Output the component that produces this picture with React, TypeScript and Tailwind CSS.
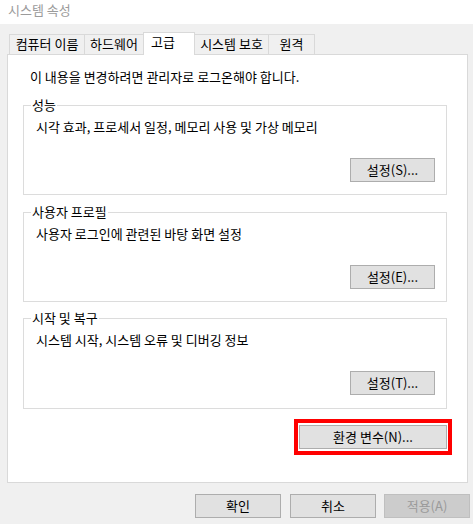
import React from "react";

const font = { fontFamily: '"Noto Sans CJK KR", "Noto Sans", sans-serif' };

function Tab({ label, w, selected, first }: { label: string; w: string; selected?: boolean; first?: boolean }) {
  if (selected) {
    return (
      <div className={`relative z-10 -ml-px h-[23px] ${w} border border-b-0 border-[#d9d9d9] bg-white pl-[7px] pt-[1px] leading-[16px]`}>
        {label}
      </div>
    );
  }
  return (
    <div
      className={`${first ? "" : "-ml-px"} mb-px h-[20px] ${w} border border-b-0 border-[#d9d9d9] bg-[#f0f0f0] pt-[1px] text-center leading-[16px]`}
    >
      {label}
    </div>
  );
}

function Btn({ label, w, disabled }: { label: string; w: string; disabled?: boolean }) {
  return (
    <div
      className={`${w} flex h-[24px] items-center justify-center border leading-[16px] ${
        disabled ? "border-[#bfbfbf] bg-[#cccccc] text-[#9a9a9a]" : "border-[#adadad] bg-[#e1e1e1] text-black"
      }`}
    >
      {label}
    </div>
  );
}

function Group({ title, desc, btn, h, mt }: { title: string; desc: string; btn: string; h: string; mt: string }) {
  return (
    <div className={`${mt} ml-[15px] flex ${h} w-[424px] flex-col border border-[#dcdcdc]`}>
      <div className="-mt-[9px] ml-[7px] w-fit bg-white px-[1px] leading-[16px]">{title}</div>
      <div className="ml-[12px] mt-[6px] leading-[16px]">{desc}</div>
      <div className="mr-[11px] mt-[23px] self-end">
        <Btn label={btn} w="w-[85px]" />
      </div>
    </div>
  );
}

export default function App() {
  return (
    <div className="flex h-[524px] w-[473px] flex-col bg-[#f0f0f0] text-[13px] text-black" style={font}>
      <div className="h-[24px] bg-white pl-[8px] pt-[2px] leading-[16px] text-[#9b9b9b]">시스템 속성</div>
      <div className="relative z-10 -mb-px flex items-end pl-[9px] pt-[8px]">
        <Tab label="컴퓨터 이름" w="w-[76px]" first />
        <Tab label="하드웨어" w="w-[60px]" />
        <Tab label="고급" w="w-[52px]" selected />
        <Tab label="시스템 보호" w="w-[75px]" />
        <Tab label="원격" w="w-[47px]" />
      </div>
      <div className="ml-[7px] flex h-[429px] w-[461px] flex-col border border-[#d9d9d9] bg-white">
        <div className="pl-[22px] pt-[14px] leading-[16px]">이 내용을 변경하려면 관리자로 로그온해야 합니다.</div>
        <Group
          mt="mt-[20px]"
          h="h-[90px]"
          title="성능"
          desc="시각 효과, 프로세서 일정, 메모리 사용 및 가상 메모리"
          btn="설정(S)..."
        />
        <Group mt="mt-[17px]" h="h-[90px]" title="사용자 프로필" desc="사용자 로그인에 관련된 바탕 화면 설정" btn="설정(E)..." />
        <Group mt="mt-[16px]" h="h-[91px]" title="시작 및 복구" desc="시스템 시작, 시스템 오류 및 디버깅 정보" btn="설정(T)..." />
        <div className="mr-[15px] mt-[10px] self-end border-[4px] border-[#ff0000] px-[1px] py-[2px]">
          <Btn label="환경 변수(N)..." w="w-[148px]" />
        </div>
      </div>
      <div className="mt-[11px] flex justify-end pr-[3px]">
        <Btn label="확인" w="w-[86px]" />
        <div className="ml-[9px]">
          <Btn label="취소" w="w-[86px]" />
        </div>
        <div className="ml-[8px]">
          <Btn label="적용(A)" w="w-[86px]" disabled />
        </div>
      </div>
    </div>
  );
}
